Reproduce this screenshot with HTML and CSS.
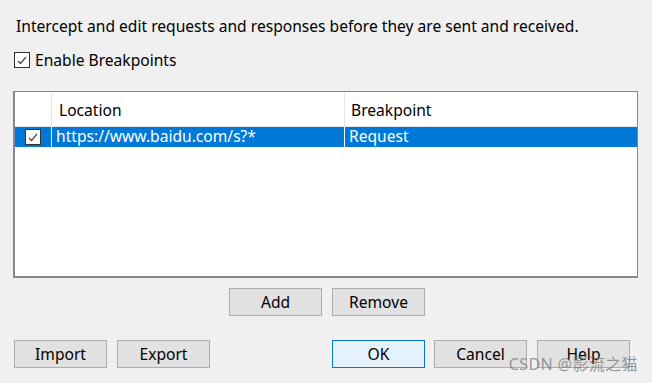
FILE: index.html
```html
<!DOCTYPE html>
<html lang="en">
<head>
  <meta charset="UTF-8">
  <title>Breakpoints</title>
  <link rel="stylesheet" href="styles.css">
</head>
<body>
  <div class="dialog">
    <p class="intro">Intercept and edit requests and responses before they are sent and received.</p>

    <label class="enable">
      <span class="check"><svg viewBox="0 0 14 14" width="14" height="14"><path d="M3 8 L5.5 10.5 L11 4" fill="none" stroke="#444" stroke-width="1.2"/></svg></span>
      Enable Breakpoints
    </label>

    <div class="grid">
      <div class="row head">
        <div class="cell c1"></div>
        <div class="cell c2">Location</div>
        <div class="cell c3">Breakpoint</div>
      </div>
      <div class="row selected">
        <div class="cell c1"><span class="check"><svg viewBox="0 0 14 14" width="14" height="14"><path d="M3 8 L5.5 10.5 L11 4" fill="none" stroke="#444" stroke-width="1.2"/></svg></span></div>
        <div class="cell c2">https://www.baidu.com/s?*</div>
        <div class="cell c3">Request</div>
      </div>
    </div>

    <div class="actions center">
      <button class="btn">Add</button>
      <button class="btn">Remove</button>
    </div>

    <div class="actions bottom">
      <div class="left">
        <button class="btn">Import</button>
        <button class="btn">Export</button>
      </div>
      <div class="right">
        <button class="btn primary">OK</button>
        <button class="btn">Cancel</button>
        <button class="btn">Help</button>
      </div>
      <div class="watermark">CSDN @影流之猫</div>
    </div>
  </div>
</body>
</html>
```

FILE: styles.css
```css
body {
  margin: 0;
  background: #f0f0f0;
  font-family: "Noto Sans", "Noto Sans CJK SC", sans-serif;
  font-size: 15.6px;
  color: #000;
}
.dialog {
  width: 652px;
  height: 383px;
  position: relative;
}
.intro {
  margin: 0;
  padding: 15px 0 0 16px;
  height: 22px;
  line-height: 22px;
}
.enable {
  display: flex;
  align-items: center;
  gap: 5px;
  margin: 13px 0 0 14px;
  height: 20px;
  line-height: 20px;
}
.check {
  display: inline-flex;
  width: 14px;
  height: 14px;
  border: 1px solid #333;
  background: #fff;
}
.grid {
  margin: 21px 0 0 13px;
  width: 622px;
  height: 184px;
  border: 1px solid #828790;
  border-width: 1px 1px 2px 2px;
  background: #fff;
}
.row {
  display: flex;
}
.row.head {
  height: 34px;
  border-bottom: 1px solid #e5e5e5;
}
.row.head .cell {
  padding-top: 3px;
  line-height: 31px;
  border-right: 1px solid #e5e5e5;
}
.row.head .c3 {
  border-right: none;
}
.row.selected {
  height: 20px;
  background: #0078d7;
  color: #fff;
}
.row.selected .cell {
  line-height: 19px;
  border-right: 1px solid #fff;
}
.row.selected .c3 {
  border-right: none;
}
.cell {
  box-sizing: border-box;
  white-space: nowrap;
}
.c1 {
  width: 37px;
  display: flex;
  align-items: center;
  justify-content: center;
}
.c2 {
  width: 293px;
  padding-left: 4px;
}
.row.head .c2 {
  padding-left: 7px;
}
.c3 {
  flex: 1;
  padding-left: 4px;
}
.row.head .c3 {
  padding-left: 6px;
}
.actions {
  display: flex;
}
.actions.center {
  justify-content: center;
  gap: 10px;
  margin-top: 10px;
  padding-left: 2px;
}
.actions.bottom {
  justify-content: space-between;
  margin: 24px 22px 0 14px;
  position: relative;
}
.left, .right {
  display: flex;
  gap: 10px;
}
.right {
  gap: 9px;
}
.right .btn:last-child {
  margin-left: 1px;
}
.btn {
  width: 93px;
  height: 28px;
  padding: 0;
  background: #e1e1e1;
  border: 1px solid #adadad;
  font-family: inherit;
  font-size: 15.6px;
  color: #000;
}
.btn.primary {
  background: #e5f1fb;
  border-color: #0078d7;
}
.watermark {
  position: absolute;
  right: -8px;
  top: 11px;
  font-size: 16px;
  color: rgba(120, 120, 120, 0.75);
  letter-spacing: 0.4px;
}
```
